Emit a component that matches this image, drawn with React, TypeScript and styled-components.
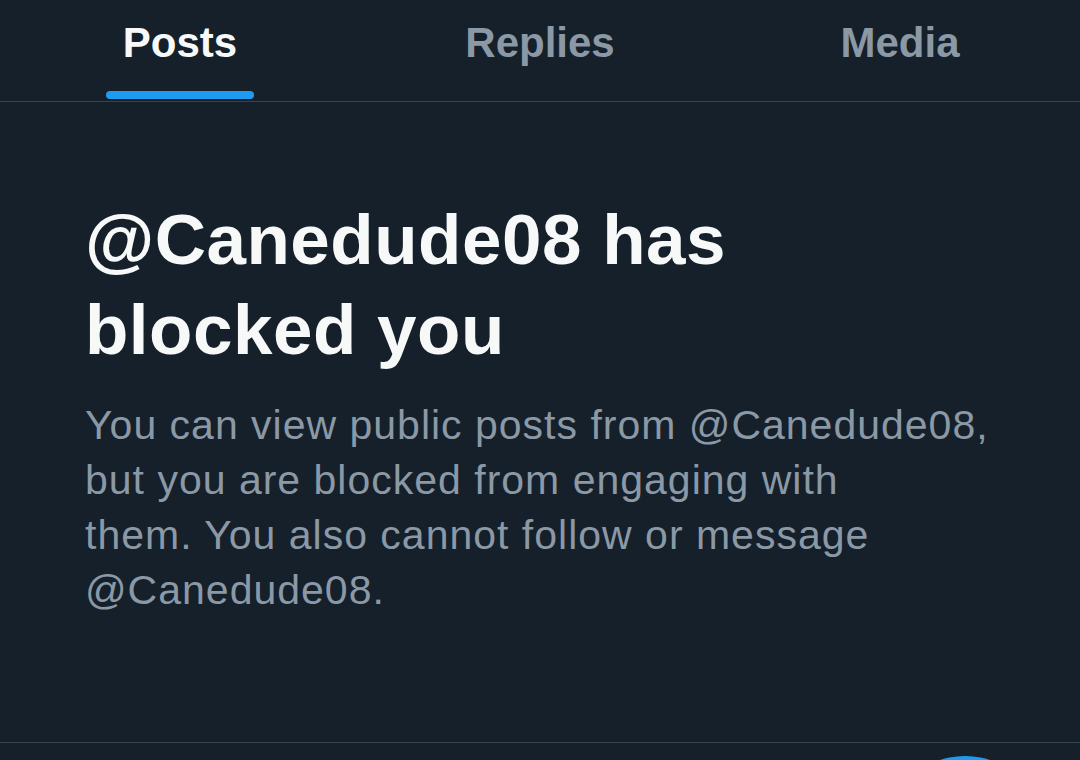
import React from "react";
import styled, { createGlobalStyle } from "styled-components";

const GlobalStyle = createGlobalStyle`
    html, body {
        margin: 0;
        padding: 0;
        background: #15202b;
    }
    body {
        font-family: "Liberation Sans", Arial, sans-serif;
        overflow: hidden;
    }
`;

const tabs = ["Posts", "Replies", "Media"];

const App: React.FC = () => {
    return (
        <Page>
            <GlobalStyle />
            <TabBar>
                {tabs.map((t, i) => (
                    <Tab key={t}>
                        <TabLabel active={i === 0}>
                            {t}
                            <Indicator active={i === 0} />
                        </TabLabel>
                    </Tab>
                ))}
            </TabBar>
            <Content>
                <Heading>@Canedude08 has blocked you</Heading>
                <Body>
                    You can view public posts from @Canedude08,
                    <br />
                    but you are blocked from engaging with
                    <br />
                    them. You also cannot follow or message
                    <br />
                    @Canedude08.
                </Body>
            </Content>
            <Fab />
        </Page>
    );
};

export default App;

const Page = styled.div`
    position: relative;
    width: 1080px;
    height: 760px;
    overflow: hidden;
    background: #15202b;
    display: flex;
    flex-direction: column;
`;

const TabBar = styled.nav`
    display: flex;
    height: 101px;
    border-bottom: 1px solid #38444d;
`;

const Tab = styled.div`
    flex: 1;
    display: flex;
    justify-content: center;
`;

const TabLabel = styled.div<{ active?: boolean }>`
    display: flex;
    flex-direction: column;
    align-items: center;
    padding-top: 18px;
    font-size: 42px;
    font-weight: 700;
    line-height: 50px;
    color: ${p => (p.active ? "#f7f9f9" : "#8b98a5")};
`;

const Indicator = styled.div<{ active?: boolean }>`
    margin: auto -17px 2px;
    align-self: stretch;
    height: 8px;
    border-radius: 4px;
    background: ${p => (p.active ? "#1d9bf0" : "transparent")};
`;

const Content = styled.div`
    flex: 1;
    padding: 93px 85px 0;
    border-bottom: 1px solid #38444d;
    margin-bottom: 17px;
`;

const Heading = styled.h1`
    margin: 0;
    max-width: 700px;
    font-size: 71px;
    line-height: 90px;
    font-weight: 700;
    letter-spacing: 0.5px;
    color: #f7f9f9;
`;

const Body = styled.p`
    margin: 23px 0 0;
    font-size: 41px;
    line-height: 55px;
    letter-spacing: 1px;
    color: #8b98a5;
    white-space: nowrap;
`;

const Fab = styled.div`
    position: absolute;
    left: 885px;
    top: 756px;
    width: 160px;
    height: 160px;
    border-radius: 50%;
    background: #1d9bf0;
`;
